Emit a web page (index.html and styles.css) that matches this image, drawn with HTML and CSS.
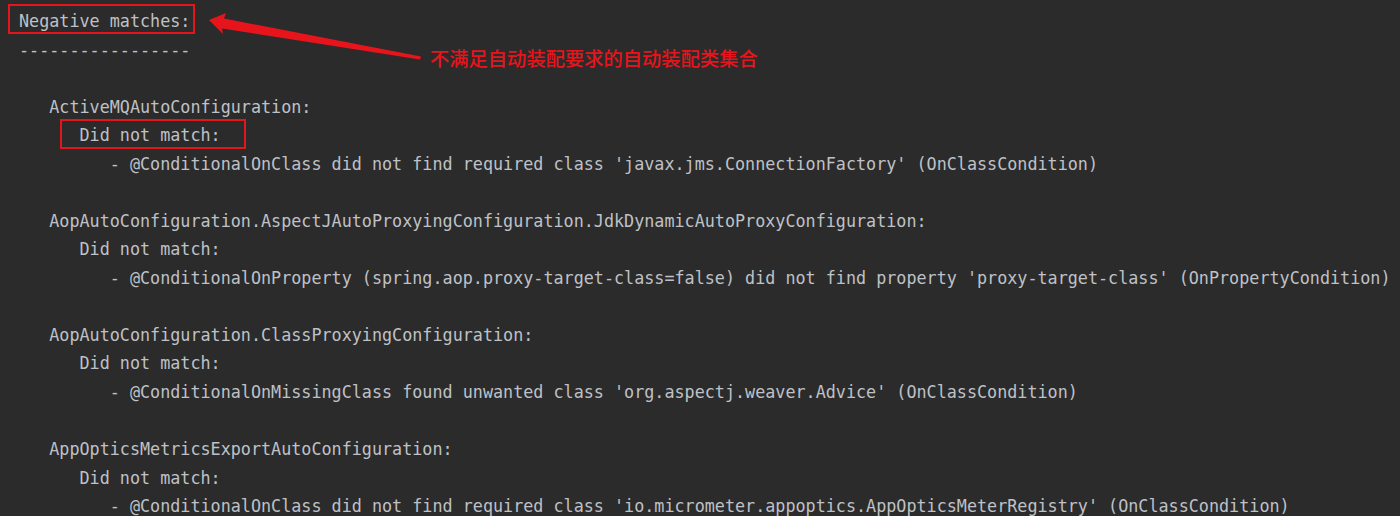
FILE: index.html
```html
<!DOCTYPE html>
<html lang="en">
<head>
<meta charset="utf-8">
<title>Negative matches</title>
<link rel="stylesheet" href="styles.css">
</head>
<body>
<div class="console">
<pre class="log">Negative matches:
-----------------

   ActiveMQAutoConfiguration:
      Did not match:
         - @ConditionalOnClass did not find required class 'javax.jms.ConnectionFactory' (OnClassCondition)

   AopAutoConfiguration.AspectJAutoProxyingConfiguration.JdkDynamicAutoProxyConfiguration:
      Did not match:
         - @ConditionalOnProperty (spring.aop.proxy-target-class=false) did not find property 'proxy-target-class' (OnPropertyCondition)

   AopAutoConfiguration.ClassProxyingConfiguration:
      Did not match:
         - @ConditionalOnMissingClass found unwanted class 'org.aspectj.weaver.Advice' (OnClassCondition)

   AppOpticsMetricsExportAutoConfiguration:
      Did not match:
         - @ConditionalOnClass did not find required class 'io.micrometer.appoptics.AppOpticsMeterRegistry' (OnClassCondition)</pre>
  <div class="mark mark-title"></div>
  <div class="mark mark-did"></div>
  <svg class="arrow" width="220" height="60" viewBox="0 0 220 60">
    <polygon points="0,15 17,8 15,13.5 212,51.5 211,54.5 13,23.5 14,29" fill="#e8141b"/>
  </svg>
  <div class="note">不满足自动装配要求的自动装配类集合</div>
</div>
</body>
</html>
```

FILE: styles.css
```css
html, body {
  margin: 0;
  padding: 0;
  background: #2b2b2c;
}

.console {
  position: relative;
  width: 1400px;
  height: 516px;
  overflow: hidden;
  background: #2b2b2c;
}

.log {
  margin: 0;
  padding: 7px 0 0 19px;
  font-family: "DejaVu Sans Mono", "Liberation Mono", monospace;
  font-size: 16.76px;
  line-height: 28.53px;
  color: #bfc1c6;
  white-space: pre;
}

.mark {
  position: absolute;
  border: 2.5px solid #e3161c;
  box-sizing: border-box;
}

.mark-title {
  left: 8px;
  top: 4px;
  width: 187px;
  height: 30px;
}

.mark-did {
  left: 60px;
  top: 119px;
  width: 186px;
  height: 30px;
}

.arrow {
  position: absolute;
  left: 209px;
  top: 5px;
}

.note {
  position: absolute;
  left: 430px;
  top: 45px;
  font-family: "Noto Sans CJK SC", sans-serif;
  font-size: 19.3px;
  font-weight: 500;
  line-height: 26px;
  color: #e8141b;
}
```
